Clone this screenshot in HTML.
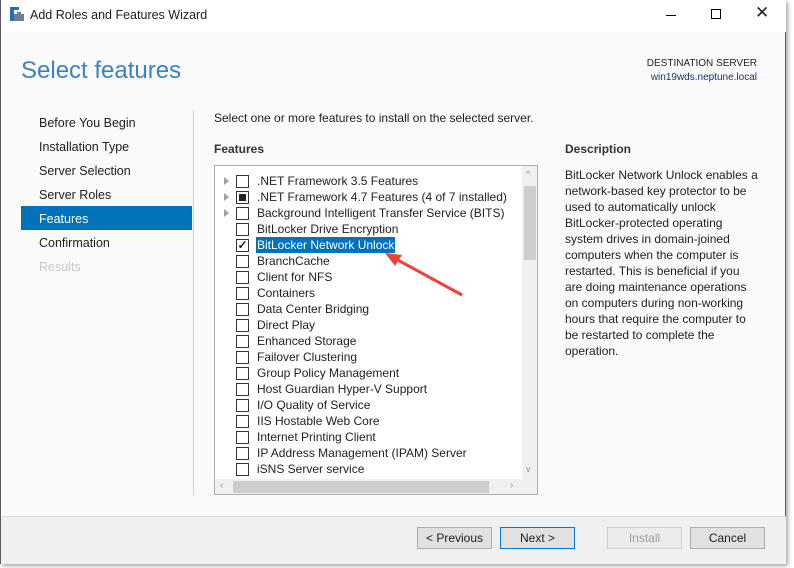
<!DOCTYPE html>
<html><head><meta charset="utf-8"><style>
*{margin:0;padding:0;box-sizing:border-box}
body{width:794px;height:568px;background:#fff;font-family:"Liberation Sans",sans-serif;font-size:12px;color:#1e1e1e;position:relative;overflow:hidden}
.a{position:absolute;white-space:nowrap}
#win{position:absolute;left:0;top:0;width:786px;height:564px;border-right:1px solid #5a5a5a;border-bottom:1px solid #5a5a5a;border-left:1px solid #5a5a5a;background:#fafafa;box-shadow:2px 2px 4px rgba(0,0,0,.35)}
#in{position:absolute;left:-1px;top:0;width:786px;height:564px}
.nav{left:39px;color:#1e1e1e;font-size:12.5px}
.row{position:absolute;left:0;height:16px;width:300px}
.cb{position:absolute;left:21px;top:2px;width:13px;height:13px;border:1px solid #333;background:#fff}
.lbl{position:absolute;left:42px;top:1px;font-size:12px;white-space:nowrap}
.tri{position:absolute;left:9px;top:4px;width:0;height:0;border-left:5px solid #a0a0a0;border-top:4px solid transparent;border-bottom:4px solid transparent}
.btn{position:absolute;top:527px;height:22px;width:75px;border:1px solid #adadad;background:#e1e1e1;text-align:center;line-height:20px;font-size:12px}
</style></head><body>
<div id="win"><div id="in">
<div class="a" style="left:1px;top:0;width:785px;height:32px;background:#fff"></div>
<svg class="a" style="left:9px;top:6px" width="16" height="16"><rect x="1" y="1" width="4" height="14" fill="#2b6cb8"/><rect x="5" y="1" width="5" height="3" fill="#2b6cb8"/><rect x="5" y="8" width="10" height="7" fill="#6a7f94"/><rect x="8" y="6" width="4" height="2" fill="#6a7f94"/></svg>
<div class="a" style="left:30px;top:8px;font-size:12.5px">Add Roles and Features Wizard</div>
<div class="a" style="left:666px;top:15px;width:10px;height:1px;background:#000"></div>
<div class="a" style="left:711px;top:9px;width:10px;height:10px;border:1px solid #000"></div>
<div class="a" style="left:755px;top:3px;font-size:17px">✕</div>
<div class="a" style="left:21px;top:57px;font-size:24px;color:#3a82c4">Select features</div>
<div class="a" style="right:29px;top:57px;font-size:10px;text-align:right;line-height:14px">DESTINATION SERVER<br><span style="color:#1e3060">win19wds.neptune.local</span></div>
<div class="a nav" style="top:116px">Before You Begin</div>
<div class="a nav" style="top:140px">Installation Type</div>
<div class="a nav" style="top:164px">Server Selection</div>
<div class="a nav" style="top:188px">Server Roles</div>
<div class="a" style="left:21px;top:206px;width:171px;height:24px;background:#0072bc"></div>
<div class="a nav" style="top:212px;color:#fff">Features</div>
<div class="a nav" style="top:236px">Confirmation</div>
<div class="a nav" style="top:260px;color:#c8c8c8">Results</div>
<div class="a" style="left:193px;top:110px;width:1px;height:385px;background:#d0d0d0"></div>
<div class="a" style="left:214px;top:111px;font-size:12px">Select one or more features to install on the selected server.</div>
<div class="a" style="left:214px;top:142px;font-size:12px;font-weight:bold;color:#333">Features</div>
<div class="a" style="left:565px;top:142px;font-size:12px;font-weight:bold;color:#333">Description</div>
<div class="a" style="left:565px;top:167px;width:194px;font-size:12px;line-height:16px;white-space:normal">BitLocker Network Unlock enables a network-based key protector to be used to automatically unlock BitLocker-protected operating system drives in domain-joined computers when the computer is restarted. This is beneficial if you are doing maintenance operations on computers during non-working hours that require the computer to be restarted to complete the operation.</div>
<div class="a" style="left:214px;top:165px;width:324px;height:330px;border:1px solid #abadb3;background:#fff;overflow:hidden">
 <div class="a" style="left:307px;top:0;width:16px;height:313px;background:#f0f0f0"></div>
 <div class="a" style="left:309px;top:20px;width:12px;height:74px;background:#cdcdcd"></div>
 <div class="a" style="left:311px;top:3px;font-size:9px;color:#999">^</div>
 <div class="a" style="left:311px;top:298px;font-size:9px;color:#999">v</div>
 <div class="a" style="left:0;top:313px;width:323px;height:16px;background:#f0f0f0"></div>
 <div class="a" style="left:18px;top:315px;width:256px;height:12px;background:#cdcdcd"></div>
 <div class="a" style="left:5px;top:314px;font-size:10px;color:#999">‹</div>
 <div class="a" style="left:295px;top:314px;font-size:10px;color:#999">›</div>
 <div style="position:absolute;left:0;top:7px">
  <div class="row" style="top:0"><div class="tri"></div><div class="cb"></div><div class="lbl">.NET Framework 3.5 Features</div></div>
  <div class="row" style="top:16px"><div class="tri"></div><div class="cb"><div style="margin:2px;width:7px;height:7px;background:#222"></div></div><div class="lbl">.NET Framework 4.7 Features (4 of 7 installed)</div></div>
  <div class="row" style="top:32px"><div class="tri"></div><div class="cb"></div><div class="lbl">Background Intelligent Transfer Service (BITS)</div></div>
  <div class="row" style="top:48px"><div class="cb"></div><div class="lbl">BitLocker Drive Encryption</div></div>
  <div class="row" style="top:64px"><div class="cb" style="font-size:12px;line-height:11px;text-align:center;font-weight:bold">✓</div><div class="lbl" style="left:41px;top:0;background:#0072bc;color:#fff;padding:1px 1px">BitLocker Network Unlock</div></div>
  <div class="row" style="top:80px"><div class="cb"></div><div class="lbl">BranchCache</div></div>
  <div class="row" style="top:96px"><div class="cb"></div><div class="lbl">Client for NFS</div></div>
  <div class="row" style="top:112px"><div class="cb"></div><div class="lbl">Containers</div></div>
  <div class="row" style="top:128px"><div class="cb"></div><div class="lbl">Data Center Bridging</div></div>
  <div class="row" style="top:144px"><div class="cb"></div><div class="lbl">Direct Play</div></div>
  <div class="row" style="top:160px"><div class="cb"></div><div class="lbl">Enhanced Storage</div></div>
  <div class="row" style="top:176px"><div class="cb"></div><div class="lbl">Failover Clustering</div></div>
  <div class="row" style="top:192px"><div class="cb"></div><div class="lbl">Group Policy Management</div></div>
  <div class="row" style="top:208px"><div class="cb"></div><div class="lbl">Host Guardian Hyper-V Support</div></div>
  <div class="row" style="top:224px"><div class="cb"></div><div class="lbl">I/O Quality of Service</div></div>
  <div class="row" style="top:240px"><div class="cb"></div><div class="lbl">IIS Hostable Web Core</div></div>
  <div class="row" style="top:256px"><div class="cb"></div><div class="lbl">Internet Printing Client</div></div>
  <div class="row" style="top:272px"><div class="cb"></div><div class="lbl">IP Address Management (IPAM) Server</div></div>
  <div class="row" style="top:288px"><div class="cb"></div><div class="lbl">iSNS Server service</div></div>
 </div>
</div>
<svg class="a" style="left:380px;top:250px" width="90" height="50"><line x1="82" y1="45" x2="14" y2="8" stroke="#e8443a" stroke-width="3"/><polygon points="5,3 22,5 15,16" fill="#e8443a"/></svg>
<div class="a" style="left:1px;top:516px;width:785px;height:48px;background:#f0f0f0;border-top:1px solid #dcdcdc"></div>
<div class="btn" style="left:417px">&lt; Previous</div>
<div class="btn" style="left:500px;border-color:#0078d7">Next &gt;</div>
<div class="btn" style="left:607px;color:#a0a0a0;background:#ececec;border-color:#cfcfcf">Install</div>
<div class="btn" style="left:690px">Cancel</div>
</div></div>
</body></html>
